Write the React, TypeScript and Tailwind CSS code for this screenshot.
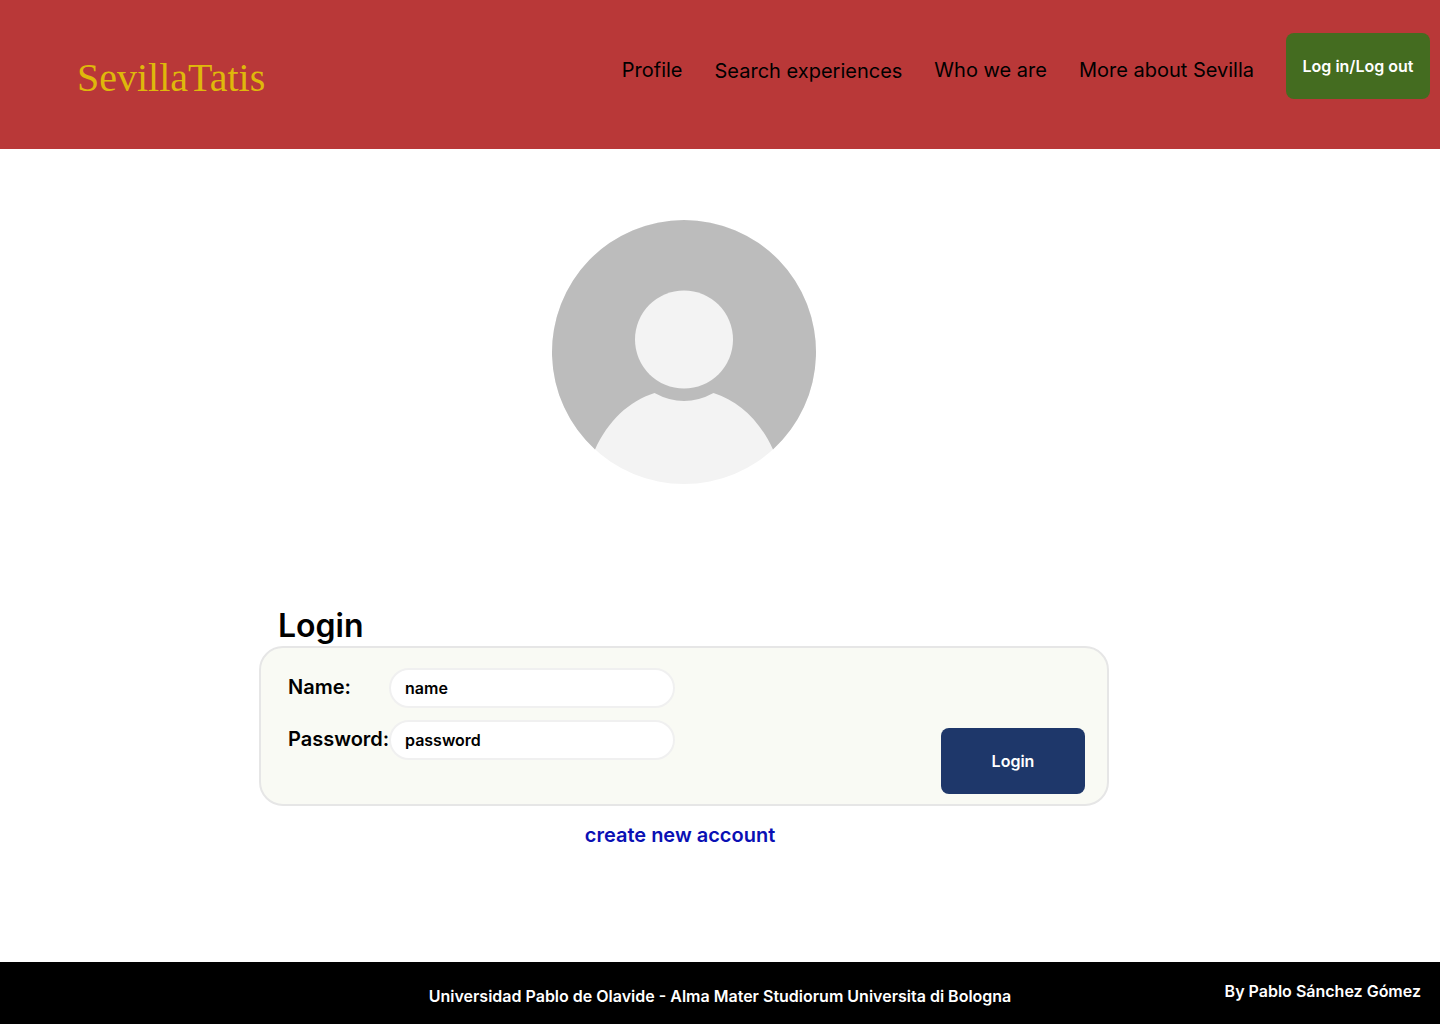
export default function App() {
  return (
    <div className="flex min-h-screen flex-col bg-white font-['Inter',sans-serif] text-black">
      <header className="flex h-[149px] items-start justify-between bg-[#b93838] pr-[10px] pl-[77px]">
        <a href="#" className="mt-[52px] font-['Liberation_Serif',serif] text-[40px] leading-[52px] text-[#dfb80b]">
          SevillaTatis
        </a>
        <nav className="mt-[33px] flex h-[66px] items-center gap-8 text-xl">
          <a href="#profile" className="pt-2">Profile</a>
          <a href="#search" className="pt-[10px]">Search experiences</a>
          <a href="#who" className="pt-2">Who we are</a>
          <a href="#more" className="pt-2">More about Sevilla</a>
          <button type="button" className="h-[66px] w-36 rounded-lg bg-[#446c20] text-base font-semibold text-white">
            Log in/Log out
          </button>
        </nav>
      </header>

      <main className="mr-[72px] flex flex-1 flex-col items-center pt-[71px]">
        <svg viewBox="0 0 264 264" className="size-[264px]" role="img" aria-label="Profile picture">
          <circle cx="132" cy="132" r="132" fill="#f3f3f3" />
          <path d="M43 229.500A132 132 0 1 1 221 229.500C208 201 187 181 161.500 173Q132 189 102.500 173C77 181 56 201 43 229.500Z" fill="#bcbcbc" />
          <circle cx="132" cy="119.500" r="49" fill="#f3f3f3" />
        </svg>

        <section className="mt-[122px] w-full max-w-[850px]">
          <h1 className="pl-[19px] text-[32px] leading-10 font-semibold">Login</h1>
          <form
            className="flex h-40 items-start justify-between rounded-3xl border-2 border-[#e6e6e6] bg-[#f9faf4] py-5 pr-[22px] pl-[27px]"
            onSubmit={(e) => e.preventDefault()}
          >
            <div className="flex flex-col gap-3">
              <div className="flex h-10 items-center">
                <label htmlFor="name" className="w-[101px] pb-0.5 text-xl font-semibold">Name:</label>
                <input id="name" defaultValue="name" className="h-10 w-[286px] rounded-full border-2 border-[#f0f0f0] bg-white px-[14px] text-base font-semibold" />
              </div>
              <div className="flex h-10 items-center">
                <label htmlFor="password" className="w-[101px] pb-0.5 text-xl font-semibold">Password:</label>
                <input id="password" defaultValue="password" className="h-10 w-[286px] rounded-full border-2 border-[#f0f0f0] bg-white px-[14px] text-base font-semibold" />
              </div>
            </div>
            <button type="submit" className="mt-[60px] h-[66px] w-36 rounded-lg bg-[#1e376a] text-base font-semibold text-white">
              Login
            </button>
          </form>
        </section>
        <a href="#register" className="mt-[15px] mr-2 text-xl font-semibold text-[#0a10b4]">create new account</a>
      </main>

      <footer className="grid h-[62px] grid-cols-[1fr_auto_1fr] items-center bg-black px-[19px] text-base font-semibold text-white">
        <p className="col-start-2 pt-[6px]">Universidad Pablo de Olavide - Alma Mater Studiorum Universita di Bologna</p>
        <p className="justify-self-end pb-1">By Pablo Sánchez Gómez</p>
      </footer>
    </div>
  );
}
